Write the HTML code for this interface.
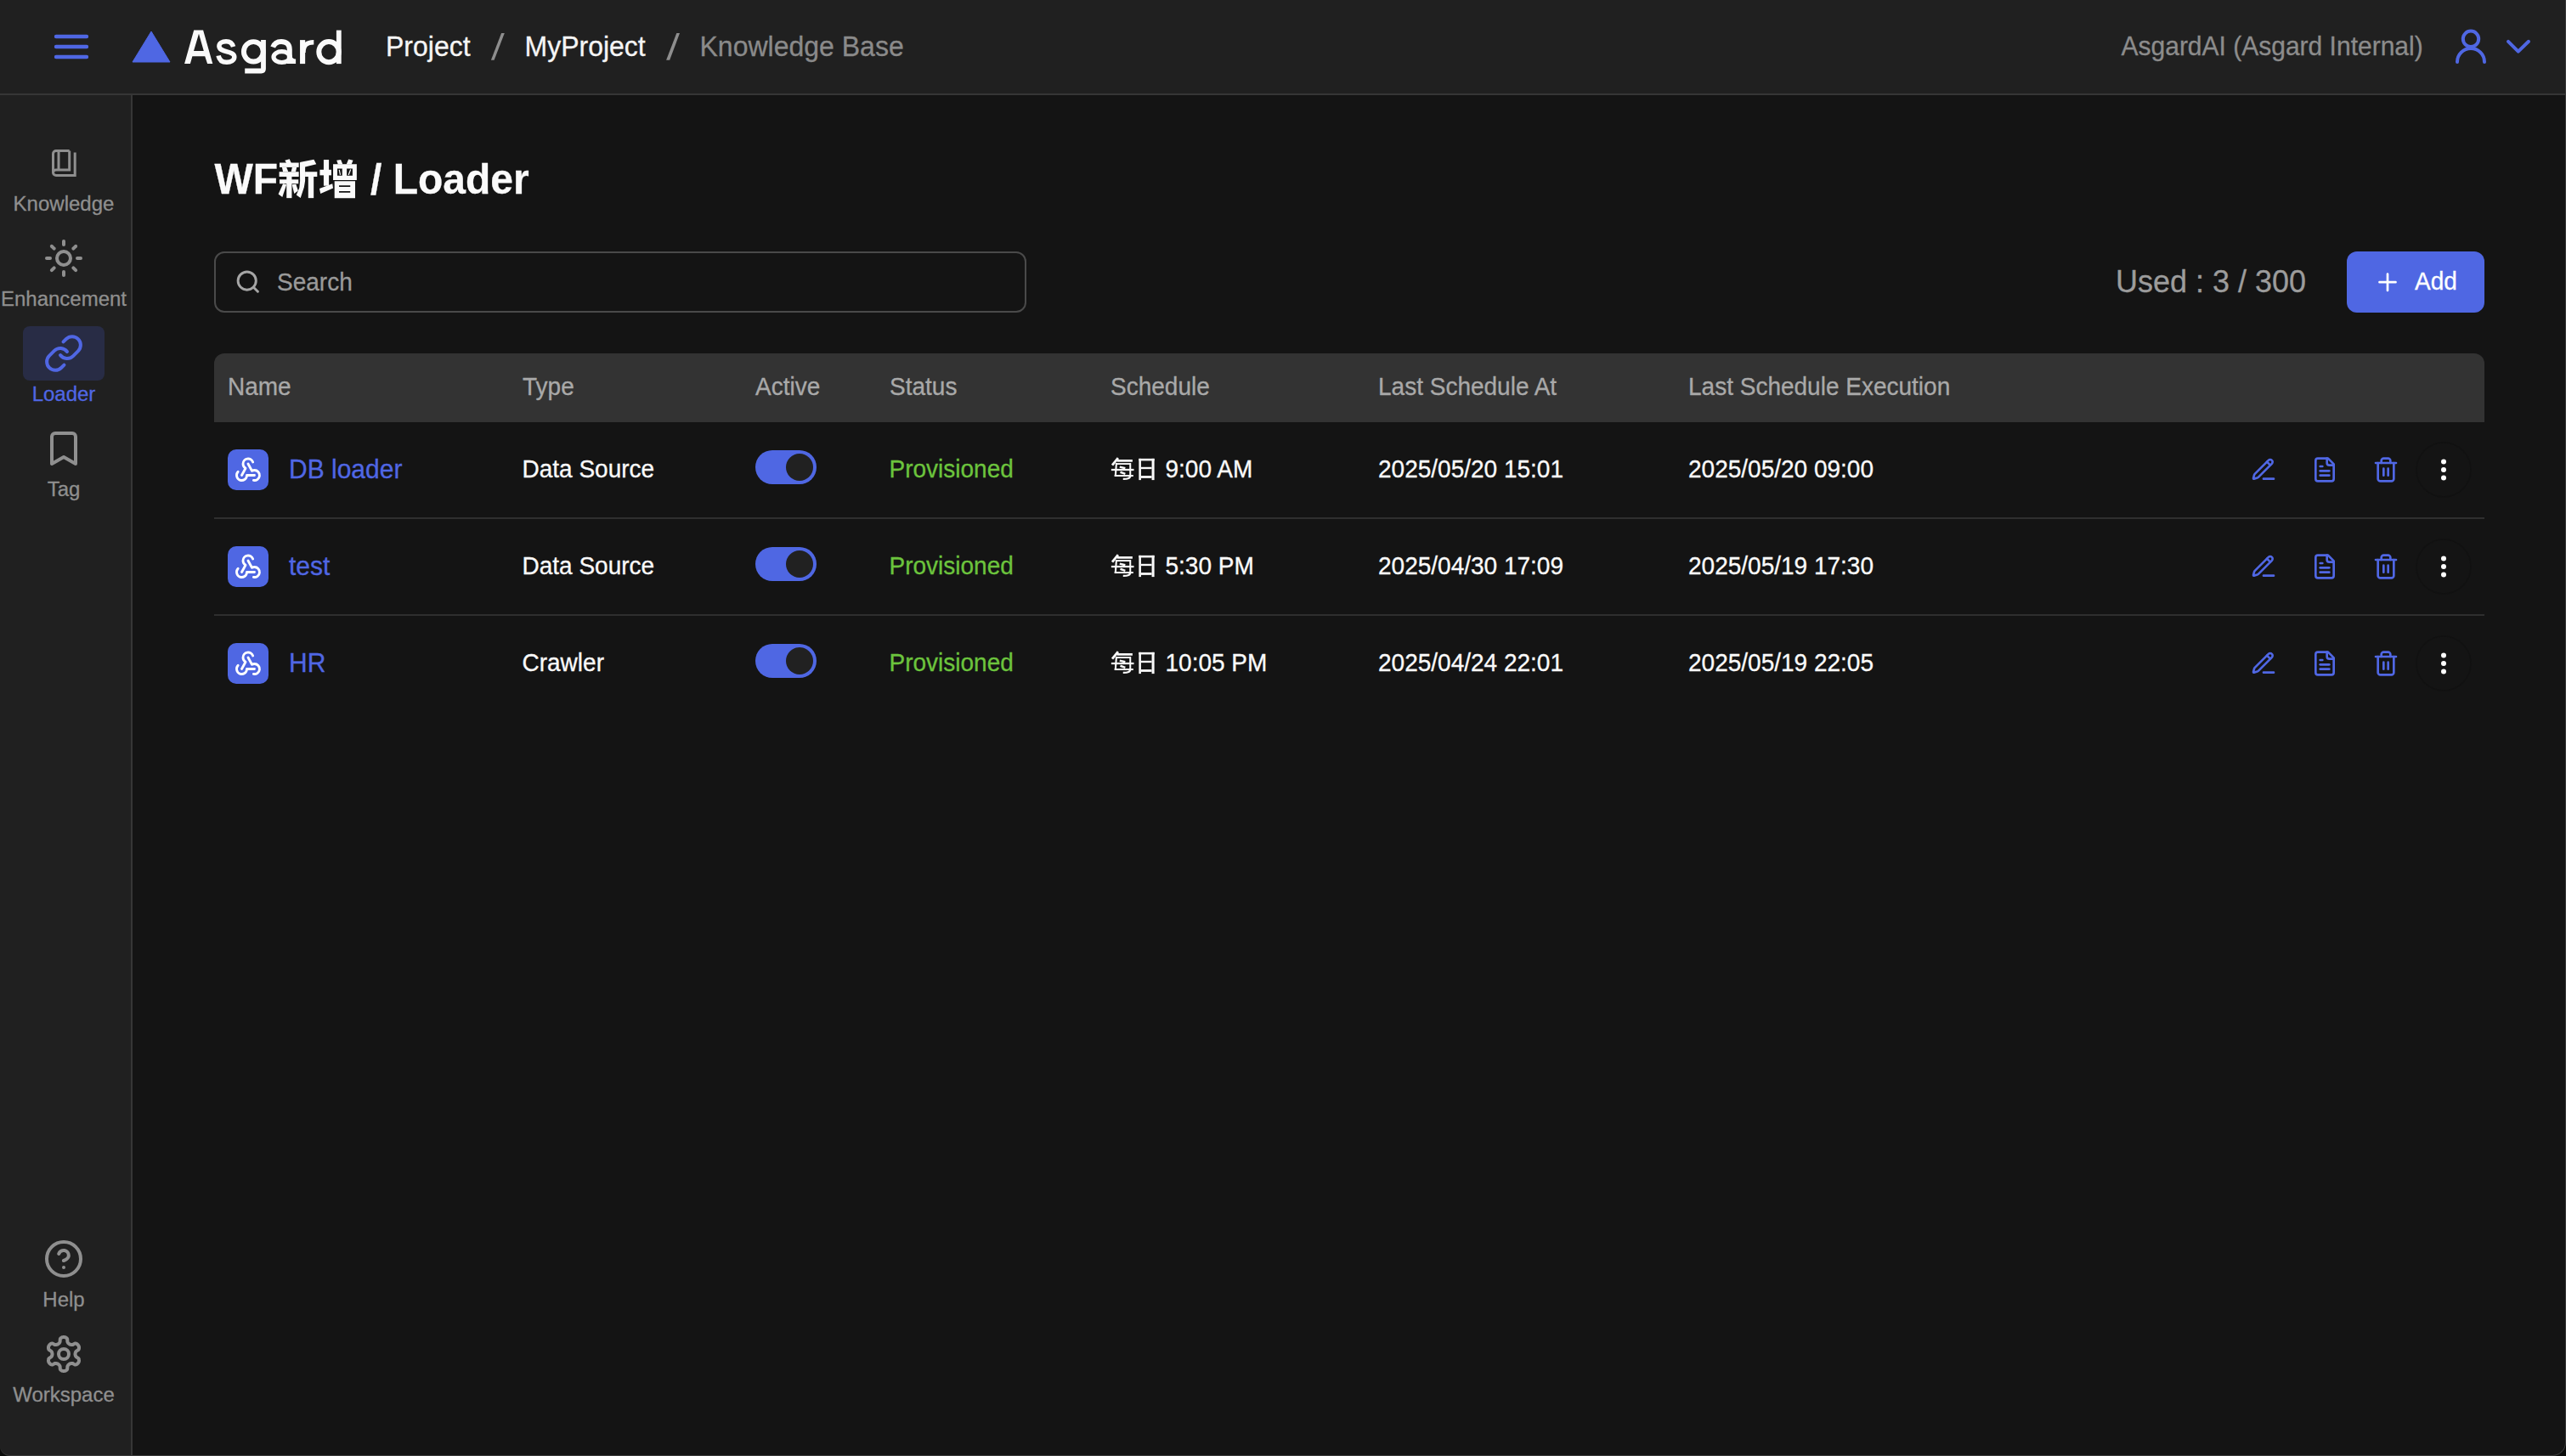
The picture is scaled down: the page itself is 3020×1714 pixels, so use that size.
<!DOCTYPE html>
<html>
<head>
<meta charset="utf-8">
<style>
html,body{margin:0;padding:0;}
body{width:3020px;height:1714px;position:relative;overflow:hidden;background:#141414;font-family:"Liberation Sans",sans-serif;}
.abs{position:absolute;}
.t{position:absolute;white-space:nowrap;line-height:1;transform:translateY(0.8px) scaleY(1.03);transform-origin:0 0.8465em;-webkit-text-stroke:0.3px currentColor;}
svg{position:absolute;overflow:visible;}
#hdr{left:0;top:0;width:3020px;height:110px;background:#202020;border-bottom:2px solid #363636;}
#side{left:0;top:112px;width:154px;height:1602px;background:#202020;border-right:2px solid #363636;}
.lbl{font-size:24px;color:#8f8f8f;text-align:center;width:156px;left:-3px;}
.hd{font-size:28px;color:#a9a9a9;}
.cell{font-size:28px;color:#fafafa;}
.blue{color:#5067e4;}
.green{color:#6cc43d;}
.sep{position:absolute;left:252px;width:2672px;height:2px;background:#2f2f2f;}
.ibox{position:absolute;left:268px;width:48px;height:48px;border-radius:10px;background:#4f67e3;}
.tog{position:absolute;left:889px;width:72px;height:40px;border-radius:20px;background:#4f67e3;}
.tog .k{position:absolute;left:36px;top:4px;width:32px;height:32px;border-radius:16px;background:#212121;}
</style>
</head>
<body>
<!-- HEADER -->
<div id="hdr" class="abs"></div>
<!-- hamburger -->
<svg style="left:0;top:0" width="3020" height="1714"><g stroke="#4f67e3" stroke-width="4.4" stroke-linecap="round"><line x1="66" y1="43" x2="102" y2="43"/><line x1="66" y1="55" x2="102" y2="55"/><line x1="66" y1="67" x2="102" y2="67"/></g>
<path d="M178 37 L200 73 L156 73 Z" fill="#4f67e3" stroke="#4f67e3" stroke-width="1" stroke-linejoin="round"/></svg>
<svg style="left:0;top:0" width="3020" height="1714"><g fill="#fafafa" stroke="none">
<path fill-rule="evenodd" d="M217.1 75.1 L223.9 75.1 L226.4 66.3 L241.2 66.3 L244.1 75.1 L250.3 75.1 L239.1 35.6 L228.2 35.6 Z M228 59.9 L239.8 59.9 L234 39.7 Z"/>
<path d="M343 64.5 Q343.6 69.6 348.1 69.6 L348.1 75.1 L343 75.1 Z"/>
</g><g fill="none" stroke="#fafafa" stroke-width="5.5">
<path d="M274.6 55.1 C273.3 50.6 270 48.7 266.1 48.7 C261.4 48.7 257.9 51 257.9 54.3 C257.9 58.4 262.2 59.7 267.2 60.9 C272.1 62.1 275.8 63.4 275.8 67.1 C275.8 71.2 271.7 73.3 266.9 73.3 C261.8 73.3 258.1 70.8 257.1 65.4"/>
<ellipse cx="298.3" cy="60.8" rx="11.4" ry="11.7" stroke-width="5.9"/>
<path d="M310 47.1 V81 Q310 83.5 307.5 83.5 H288.2" stroke-width="5.8"/>
<path d="M321.2 55.6 C322.8 51 326 48.9 331 48.9 C337 48.9 340.8 52 340.8 58 V75.1" stroke-width="6"/>
<ellipse cx="331.6" cy="67.1" rx="9.6" ry="6.4" stroke-width="5.2"/>
<path d="M356.1 47.1 V75.1" stroke-width="6.1"/>
<path d="M357 62 C357 53 361 49.7 369.3 49.7" stroke-width="5.4"/>
<ellipse cx="387" cy="61.1" rx="11.7" ry="12.1" stroke-width="6"/>
<path d="M398.8 35.6 V75.1" stroke-width="5.8"/>
</g></svg>
<div class="t" style="left:454px;top:38px;font-size:32px;color:#f5f5f5;">Project</div>
<svg style="left:0;top:0" width="3020" height="1714"><g fill="#8e8e8e"><polygon points="577.9,70.7 581.6,70.7 593.8,39 590.1,39"/><polygon points="784.1,70.7 788.2,70.7 800,39 796.3,39"/></g></svg>
<div class="t" style="left:617.5px;top:38px;font-size:32px;color:#f5f5f5;">MyProject</div>

<div class="t" style="left:823.5px;top:38px;font-size:32px;color:#8a8a8a;">Knowledge Base</div>
<div class="t" style="left:2496.5px;top:39px;font-size:30px;color:#8c8c8c;">AsgardAI (Asgard Internal)</div>
<svg style="left:0;top:0" width="3020" height="1714"><g fill="none" stroke="#4f67e3" stroke-width="4" stroke-linecap="round" stroke-linejoin="round">
<circle cx="2908" cy="45.8" r="9.2"/><path d="M2892 73 A16 16 0 0 1 2924 73"/>
<path d="M2952 48.8 L2963.8 60.6 L2976 48.8"/></g></svg>

<!-- SIDEBAR -->
<div id="side" class="abs"></div>
<svg style="left:0;top:0" width="3020" height="1714"><g fill="none" stroke="#8f8f8f" stroke-width="3" stroke-linejoin="miter" stroke-linecap="butt">
<path d="M81.7 177.5 H66 a3.5 3.5 0 0 0 -3.5 3.5 V202.9 a3.5 3.5 0 0 0 3.5 3.5 H88.2 V179.5"/>
<path d="M81.7 177.5 V200.1 H66 a3.3 3.3 0 0 0 -3.5 3.3"/>
<path d="M69 177.5 V200.1"/>
</g></svg>
<div class="t lbl" style="top:227px;">Knowledge</div>
<svg style="left:51px;top:280px" width="48" height="48" viewBox="0 0 24 24"><g fill="none" stroke="#8f8f8f" stroke-width="2" stroke-linecap="round" stroke-linejoin="round"><circle cx="12" cy="12" r="4"/><path d="M12 2v2"/><path d="M12 20v2"/><path d="m4.93 4.93 1.41 1.41"/><path d="m17.66 17.66 1.41 1.41"/><path d="M2 12h2"/><path d="M20 12h2"/><path d="m6.34 17.66-1.41 1.41"/><path d="m19.07 4.93-1.41 1.41"/></g></svg>
<div class="t lbl" style="top:339px;">Enhancement</div>
<div class="abs" style="left:27px;top:384px;width:96px;height:64px;border-radius:8px;background:#282c45;"></div>
<svg style="left:51px;top:392px" width="48" height="48" viewBox="0 0 24 24"><g fill="none" stroke="#5067e4" stroke-width="2" stroke-linecap="round" stroke-linejoin="round"><path d="M10 13a5 5 0 0 0 7.54.54l3-3a5 5 0 0 0-7.07-7.07l-1.72 1.71"/><path d="M14 11a5 5 0 0 0-7.54-.54l-3 3a5 5 0 0 0 7.07 7.07l1.71-1.71"/></g></svg>
<div class="t lbl" style="top:451px;color:#5067e4;">Loader</div>
<svg style="left:51px;top:504px" width="48" height="48" viewBox="0 0 24 24"><g fill="none" stroke="#8f8f8f" stroke-width="2" stroke-linecap="round" stroke-linejoin="round"><path d="m19 21-7-4-7 4V5a2 2 0 0 1 2-2h10a2 2 0 0 1 2 2v16z"/></g></svg>
<div class="t lbl" style="top:563px;">Tag</div>
<svg style="left:51px;top:1458px" width="48" height="48" viewBox="0 0 24 24"><g fill="none" stroke="#8f8f8f" stroke-width="2" stroke-linecap="round" stroke-linejoin="round"><circle cx="12" cy="12" r="10"/><path d="M9.09 9a3 3 0 0 1 5.83 1c0 2-3 3-3 3"/><path d="M12 17h.01"/></g></svg>
<div class="t lbl" style="top:1517px;">Help</div>
<svg style="left:0;top:0" width="3020" height="1714"><g fill="none" stroke="#8f8f8f" stroke-width="4" stroke-linecap="round" stroke-linejoin="round"><path d="M75.0 1574.0 L75.5 1574.0 L76.0 1574.1 L76.6 1574.2 L77.1 1574.4 L77.5 1574.6 L78.0 1574.9 L78.5 1575.3 L78.9 1575.7 L79.2 1576.3 L79.3 1577.8 L79.4 1579.3 L79.6 1579.9 L79.8 1580.4 L80.1 1580.8 L80.3 1581.1 L80.6 1581.4 L80.9 1581.7 L81.2 1581.9 L81.5 1582.1 L81.8 1582.3 L82.1 1582.5 L82.4 1582.6 L82.7 1582.7 L83.1 1582.8 L83.5 1582.9 L83.9 1583.0 L84.4 1583.0 L84.9 1583.0 L85.6 1582.9 L86.8 1582.2 L88.2 1581.5 L88.9 1581.5 L89.5 1581.6 L90.0 1581.8 L90.5 1582.1 L90.9 1582.4 L91.3 1582.8 L91.7 1583.1 L92.0 1583.6 L92.3 1584.0 L92.6 1584.5 L92.8 1585.0 L92.9 1585.5 L93.0 1586.0 L93.0 1586.5 L93.0 1587.1 L92.9 1587.6 L92.8 1588.2 L92.4 1588.8 L91.2 1589.7 L89.9 1590.4 L89.5 1590.9 L89.2 1591.4 L89.0 1591.8 L88.8 1592.2 L88.7 1592.6 L88.6 1592.9 L88.6 1593.3 L88.5 1593.6 L88.5 1594.0 L88.5 1594.4 L88.6 1594.7 L88.6 1595.1 L88.7 1595.4 L88.8 1595.8 L89.0 1596.2 L89.2 1596.6 L89.5 1597.1 L89.9 1597.6 L91.2 1598.3 L92.4 1599.2 L92.8 1599.8 L92.9 1600.4 L93.0 1600.9 L93.0 1601.5 L93.0 1602.0 L92.9 1602.5 L92.8 1603.0 L92.6 1603.5 L92.3 1604.0 L92.0 1604.4 L91.7 1604.9 L91.3 1605.2 L90.9 1605.6 L90.5 1605.9 L90.0 1606.2 L89.5 1606.4 L88.9 1606.5 L88.2 1606.5 L86.8 1605.8 L85.6 1605.1 L84.9 1605.0 L84.4 1605.0 L83.9 1605.0 L83.5 1605.1 L83.1 1605.2 L82.7 1605.3 L82.4 1605.4 L82.1 1605.5 L81.8 1605.7 L81.5 1605.9 L81.2 1606.1 L80.9 1606.3 L80.6 1606.6 L80.3 1606.9 L80.1 1607.2 L79.8 1607.6 L79.6 1608.1 L79.4 1608.7 L79.3 1610.2 L79.2 1611.7 L78.9 1612.3 L78.5 1612.7 L78.0 1613.1 L77.5 1613.4 L77.1 1613.6 L76.6 1613.8 L76.0 1613.9 L75.5 1614.0 L75.0 1614.0 L74.5 1614.0 L74.0 1613.9 L73.4 1613.8 L72.9 1613.6 L72.5 1613.4 L72.0 1613.1 L71.5 1612.7 L71.1 1612.3 L70.8 1611.7 L70.7 1610.2 L70.6 1608.7 L70.4 1608.1 L70.2 1607.6 L69.9 1607.2 L69.7 1606.9 L69.4 1606.6 L69.1 1606.3 L68.8 1606.1 L68.5 1605.9 L68.2 1605.7 L67.9 1605.5 L67.6 1605.4 L67.3 1605.3 L66.9 1605.2 L66.5 1605.1 L66.1 1605.0 L65.6 1605.0 L65.1 1605.0 L64.4 1605.1 L63.2 1605.8 L61.8 1606.5 L61.1 1606.5 L60.5 1606.4 L60.0 1606.2 L59.5 1605.9 L59.1 1605.6 L58.7 1605.2 L58.3 1604.9 L58.0 1604.4 L57.7 1604.0 L57.4 1603.5 L57.2 1603.0 L57.1 1602.5 L57.0 1602.0 L57.0 1601.5 L57.0 1600.9 L57.1 1600.4 L57.2 1599.8 L57.6 1599.2 L58.8 1598.3 L60.1 1597.6 L60.5 1597.1 L60.8 1596.6 L61.0 1596.2 L61.2 1595.8 L61.3 1595.4 L61.4 1595.1 L61.4 1594.7 L61.5 1594.4 L61.5 1594.0 L61.5 1593.6 L61.4 1593.3 L61.4 1592.9 L61.3 1592.6 L61.2 1592.2 L61.0 1591.8 L60.8 1591.4 L60.5 1590.9 L60.1 1590.4 L58.8 1589.7 L57.6 1588.8 L57.2 1588.2 L57.1 1587.6 L57.0 1587.1 L57.0 1586.5 L57.0 1586.0 L57.1 1585.5 L57.2 1585.0 L57.4 1584.5 L57.7 1584.0 L58.0 1583.6 L58.3 1583.1 L58.7 1582.8 L59.1 1582.4 L59.5 1582.1 L60.0 1581.8 L60.5 1581.6 L61.1 1581.5 L61.8 1581.5 L63.2 1582.2 L64.4 1582.9 L65.1 1583.0 L65.6 1583.0 L66.1 1583.0 L66.5 1582.9 L66.9 1582.8 L67.3 1582.7 L67.6 1582.6 L67.9 1582.5 L68.2 1582.3 L68.5 1582.1 L68.8 1581.9 L69.1 1581.7 L69.4 1581.4 L69.7 1581.1 L69.9 1580.8 L70.2 1580.4 L70.4 1579.9 L70.6 1579.3 L70.7 1577.8 L70.8 1576.3 L71.1 1575.7 L71.5 1575.3 L72.0 1574.9 L72.5 1574.6 L72.9 1574.4 L73.4 1574.2 L74.0 1574.1 L74.5 1574.0 Z"/><circle cx="75" cy="1594" r="6"/></g></svg>
<div class="t lbl" style="top:1629px;">Workspace</div>

<!-- MAIN -->
<div class="t" style="left:252.5px;top:187px;font-size:48px;font-weight:bold;color:#fafafa;">WF</div>
<svg style="left:0;top:0" width="3020" height="1714"><g transform="translate(322 180) scale(0.041203)" fill="#fafafa" stroke="none">
<polygon points="325,215 455,175 505,290 375,310"/>
<rect x="170" y="280" width="550" height="130"/>
<polygon points="240,410 370,410 420,540 270,540"/>
<polygon points="530,410 660,410 630,540 500,540"/>
<rect x="160" y="540" width="560" height="140"/>
<rect x="170" y="760" width="540" height="120"/>
<rect x="370" y="680" width="150" height="610"/>
<polygon points="270,880 370,905 250,1265 135,1180"/>
<polygon points="525,905 640,890 700,1080 590,1165"/>
<polygon points="750,270 1150,190 1220,320 900,400"/>
<polygon points="750,270 900,330 900,800 870,980 770,1285 650,1200 735,1000 755,800"/>
<rect x="900" y="540" width="345" height="140"/>
<rect x="990" y="680" width="155" height="610"/>
<rect x="1430" y="195" width="150" height="745"/>
<rect x="1320" y="480" width="330" height="160"/>
<polygon points="1310,1020 1680,880 1700,1010 1340,1165"/>
<polygon points="1800,210 1920,195 1975,325 1840,325"/>
<polygon points="2140,185 2270,210 2225,325 2080,325"/>
<path fill-rule="evenodd" d="M1700 320 H2375 V775 H1700 Z M1820 450 H1960 V650 H1820 Z M2090 450 H2255 V650 H2090 Z"/>
<line x1="1875" y1="480" x2="1905" y2="630" stroke="#fafafa" stroke-width="30"/>
<line x1="2200" y1="475" x2="2140" y2="630" stroke="#fafafa" stroke-width="30"/>
<path fill-rule="evenodd" d="M1740 810 H2330 V1290 H1740 Z M1870 930 H2190 V970 H1870 Z M1870 1095 H2190 V1135 H1870 Z"/>
</g></svg>
<div class="t" style="left:436px;top:187px;font-size:48px;font-weight:bold;color:#fafafa;">/ Loader</div>

<div class="abs" style="left:252px;top:296px;width:952px;height:68px;border:2px solid #4a4a4a;border-radius:12px;"></div>
<svg style="left:0;top:0" width="3020" height="1714"><g fill="none" stroke="#a6a6a6" stroke-width="2.9" stroke-linecap="round"><circle cx="290.7" cy="330.6" r="10.6"/><path d="M298.4 338.3 L303.4 343.3"/></g></svg>
<div class="t" style="left:326px;top:317.5px;font-size:28px;color:#9a9a9a;">Search</div>

<div class="t" style="left:2490px;top:313px;font-size:36px;color:#9c9c9c;">Used : 3 / 300</div>
<div class="abs" style="left:2762px;top:296px;width:162px;height:72px;border-radius:12px;background:#4f67e3;"></div>
<svg style="left:0;top:0" width="3020" height="1714"><g stroke="#fff" stroke-width="2.7" stroke-linecap="round"><path d="M2810 322.5 V342 M2800.5 332.2 H2819.5"/></g></svg>
<div class="t" style="left:2842px;top:317px;font-size:28px;color:#fff;">Add</div>

<!-- TABLE -->
<div class="abs" style="left:252px;top:416px;width:2672px;height:81px;background:#333333;border-radius:12px 12px 0 0;"></div>
<div class="t hd" style="left:268px;top:441px;">Name</div>
<div class="t hd" style="left:615px;top:441px;">Type</div>
<div class="t hd" style="left:889px;top:441px;">Active</div>
<div class="t hd" style="left:1047px;top:441px;">Status</div>
<div class="t hd" style="left:1307px;top:441px;">Schedule</div>
<div class="t hd" style="left:1622px;top:441px;">Last Schedule At</div>
<div class="t hd" style="left:1987px;top:441px;">Last Schedule Execution</div>

<div class="ibox" style="top:529px;"><svg style="left:6px;top:5px" width="36" height="36" viewBox="0 0 24 24"><g fill="none" stroke="#fff" stroke-width="1.9" stroke-linecap="round" stroke-linejoin="round"><path d="M4.12 14.22A4 4 0 1 0 11 17h6"/><path d="M16.24 20.93A4 4 0 1 0 17 13c-.706 0 -1.424 .179 -2 .5l-3 -5.5"/><path d="M15.76 6.63A4 4 0 0 0 8 8c0 1.506 .77 2.818 2 3.5l-3 5.5"/></g></svg></div>
<div class="t cell blue" style="left:340px;top:537px;font-size:30px;">DB loader</div>
<div class="t cell" style="left:614.5px;top:538px;">Data Source</div>
<div class="tog" style="top:530px;"><div class="k"></div></div>
<div class="t cell green" style="left:1046.5px;top:538px;">Provisioned</div>
<svg style="left:0;top:0" width="3020" height="1714"><g transform="translate(1304 536) scale(0.023381)" fill="#fafafa" stroke="none">
<line x1="510" y1="130" x2="215" y2="500" stroke="#fafafa" stroke-width="120"/>
<rect x="450" y="215" width="785" height="115"/>
<rect x="410" y="390" width="740" height="80"/>
<polygon points="380,390 470,390 420,1060 330,1060"/>
<rect x="1080" y="390" width="85" height="700"/>
<path d="M1122 1040 Q1100 1200 760 1195" fill="none" stroke="#fafafa" stroke-width="100"/>
<rect x="165" y="680" width="1140" height="95"/>
<rect x="330" y="985" width="945" height="85"/>
<line x1="590" y1="585" x2="870" y2="650" stroke="#fafafa" stroke-width="105"/>
<line x1="620" y1="845" x2="870" y2="935" stroke="#fafafa" stroke-width="105"/>
<rect x="1555" y="165" width="110" height="1080"/>
<rect x="2205" y="165" width="130" height="1080"/>
<rect x="1555" y="165" width="780" height="110"/>
<rect x="1665" y="590" width="540" height="100"/>
<rect x="1665" y="1030" width="540" height="120"/>
</g></svg>
<div class="t cell" style="left:1371.5px;top:538px;">9:00 AM</div>
<div class="t cell" style="left:1622px;top:538px;">2025/05/20 15:01</div>
<div class="t cell" style="left:1987px;top:538px;">2025/05/20 09:00</div>
<svg style="left:2648px;top:537px" width="32" height="32" viewBox="0 0 24 24"><g fill="none" stroke="#5067e4" stroke-width="2" stroke-linecap="round" stroke-linejoin="round"><path d="M12 20h9"/><path d="M16.376 3.622a1 1 0 0 1 3.002 3.002L7.368 18.635a2 2 0 0 1-.855.506l-2.872.838a.5.5 0 0 1-.62-.62l.838-2.872a2 2 0 0 1 .506-.854z"/><path d="m15 5 3 3"/></g></svg>
<svg style="left:2720px;top:537px" width="32" height="32" viewBox="0 0 24 24"><g fill="none" stroke="#5067e4" stroke-width="2" stroke-linecap="round" stroke-linejoin="round"><path d="M15 2H6a2 2 0 0 0-2 2v16a2 2 0 0 0 2 2h12a2 2 0 0 0 2-2V7Z"/><path d="M14 2v4a2 2 0 0 0 2 2h4"/><path d="M10 9H8"/><path d="M16 13H8"/><path d="M16 17H8"/></g></svg>
<svg style="left:2792px;top:537px" width="32" height="32" viewBox="0 0 24 24"><g fill="none" stroke="#5067e4" stroke-width="2" stroke-linecap="round" stroke-linejoin="round"><path d="M3 6h18"/><path d="M19 6v14c0 1-1 2-2 2H7c-1 0-2-1-2-2V6"/><path d="M8 6V4c0-1 1-2 2-2h4c1 0 2 1 2 2v2"/><line x1="10" x2="10" y1="11" y2="17"/><line x1="14" x2="14" y1="11" y2="17"/></g></svg>
<svg style="left:0;top:0" width="3020" height="1714"><circle cx="2876" cy="553.0" r="32" fill="none" stroke="#111111" stroke-width="1.5"/><g fill="#fff"><circle cx="2876" cy="543.4" r="3"/><circle cx="2876" cy="553" r="3"/><circle cx="2876" cy="562.6" r="3"/></g></svg>
<div class="sep" style="top:609px;"></div>
<div class="ibox" style="top:643px;"><svg style="left:6px;top:5px" width="36" height="36" viewBox="0 0 24 24"><g fill="none" stroke="#fff" stroke-width="1.9" stroke-linecap="round" stroke-linejoin="round"><path d="M4.12 14.22A4 4 0 1 0 11 17h6"/><path d="M16.24 20.93A4 4 0 1 0 17 13c-.706 0 -1.424 .179 -2 .5l-3 -5.5"/><path d="M15.76 6.63A4 4 0 0 0 8 8c0 1.506 .77 2.818 2 3.5l-3 5.5"/></g></svg></div>
<div class="t cell blue" style="left:340px;top:651px;font-size:30px;">test</div>
<div class="t cell" style="left:614.5px;top:652px;">Data Source</div>
<div class="tog" style="top:644px;"><div class="k"></div></div>
<div class="t cell green" style="left:1046.5px;top:652px;">Provisioned</div>
<svg style="left:0;top:0" width="3020" height="1714"><g transform="translate(1304 650) scale(0.023381)" fill="#fafafa" stroke="none">
<line x1="510" y1="130" x2="215" y2="500" stroke="#fafafa" stroke-width="120"/>
<rect x="450" y="215" width="785" height="115"/>
<rect x="410" y="390" width="740" height="80"/>
<polygon points="380,390 470,390 420,1060 330,1060"/>
<rect x="1080" y="390" width="85" height="700"/>
<path d="M1122 1040 Q1100 1200 760 1195" fill="none" stroke="#fafafa" stroke-width="100"/>
<rect x="165" y="680" width="1140" height="95"/>
<rect x="330" y="985" width="945" height="85"/>
<line x1="590" y1="585" x2="870" y2="650" stroke="#fafafa" stroke-width="105"/>
<line x1="620" y1="845" x2="870" y2="935" stroke="#fafafa" stroke-width="105"/>
<rect x="1555" y="165" width="110" height="1080"/>
<rect x="2205" y="165" width="130" height="1080"/>
<rect x="1555" y="165" width="780" height="110"/>
<rect x="1665" y="590" width="540" height="100"/>
<rect x="1665" y="1030" width="540" height="120"/>
</g></svg>
<div class="t cell" style="left:1371.5px;top:652px;">5:30 PM</div>
<div class="t cell" style="left:1622px;top:652px;">2025/04/30 17:09</div>
<div class="t cell" style="left:1987px;top:652px;">2025/05/19 17:30</div>
<svg style="left:2648px;top:651px" width="32" height="32" viewBox="0 0 24 24"><g fill="none" stroke="#5067e4" stroke-width="2" stroke-linecap="round" stroke-linejoin="round"><path d="M12 20h9"/><path d="M16.376 3.622a1 1 0 0 1 3.002 3.002L7.368 18.635a2 2 0 0 1-.855.506l-2.872.838a.5.5 0 0 1-.62-.62l.838-2.872a2 2 0 0 1 .506-.854z"/><path d="m15 5 3 3"/></g></svg>
<svg style="left:2720px;top:651px" width="32" height="32" viewBox="0 0 24 24"><g fill="none" stroke="#5067e4" stroke-width="2" stroke-linecap="round" stroke-linejoin="round"><path d="M15 2H6a2 2 0 0 0-2 2v16a2 2 0 0 0 2 2h12a2 2 0 0 0 2-2V7Z"/><path d="M14 2v4a2 2 0 0 0 2 2h4"/><path d="M10 9H8"/><path d="M16 13H8"/><path d="M16 17H8"/></g></svg>
<svg style="left:2792px;top:651px" width="32" height="32" viewBox="0 0 24 24"><g fill="none" stroke="#5067e4" stroke-width="2" stroke-linecap="round" stroke-linejoin="round"><path d="M3 6h18"/><path d="M19 6v14c0 1-1 2-2 2H7c-1 0-2-1-2-2V6"/><path d="M8 6V4c0-1 1-2 2-2h4c1 0 2 1 2 2v2"/><line x1="10" x2="10" y1="11" y2="17"/><line x1="14" x2="14" y1="11" y2="17"/></g></svg>
<svg style="left:0;top:0" width="3020" height="1714"><circle cx="2876" cy="667.0" r="32" fill="none" stroke="#111111" stroke-width="1.5"/><g fill="#fff"><circle cx="2876" cy="657.4" r="3"/><circle cx="2876" cy="667" r="3"/><circle cx="2876" cy="676.6" r="3"/></g></svg>
<div class="sep" style="top:723px;"></div>
<div class="ibox" style="top:757px;"><svg style="left:6px;top:5px" width="36" height="36" viewBox="0 0 24 24"><g fill="none" stroke="#fff" stroke-width="1.9" stroke-linecap="round" stroke-linejoin="round"><path d="M4.12 14.22A4 4 0 1 0 11 17h6"/><path d="M16.24 20.93A4 4 0 1 0 17 13c-.706 0 -1.424 .179 -2 .5l-3 -5.5"/><path d="M15.76 6.63A4 4 0 0 0 8 8c0 1.506 .77 2.818 2 3.5l-3 5.5"/></g></svg></div>
<div class="t cell blue" style="left:340px;top:765px;font-size:30px;">HR</div>
<div class="t cell" style="left:614.5px;top:766px;">Crawler</div>
<div class="tog" style="top:758px;"><div class="k"></div></div>
<div class="t cell green" style="left:1046.5px;top:766px;">Provisioned</div>
<svg style="left:0;top:0" width="3020" height="1714"><g transform="translate(1304 764) scale(0.023381)" fill="#fafafa" stroke="none">
<line x1="510" y1="130" x2="215" y2="500" stroke="#fafafa" stroke-width="120"/>
<rect x="450" y="215" width="785" height="115"/>
<rect x="410" y="390" width="740" height="80"/>
<polygon points="380,390 470,390 420,1060 330,1060"/>
<rect x="1080" y="390" width="85" height="700"/>
<path d="M1122 1040 Q1100 1200 760 1195" fill="none" stroke="#fafafa" stroke-width="100"/>
<rect x="165" y="680" width="1140" height="95"/>
<rect x="330" y="985" width="945" height="85"/>
<line x1="590" y1="585" x2="870" y2="650" stroke="#fafafa" stroke-width="105"/>
<line x1="620" y1="845" x2="870" y2="935" stroke="#fafafa" stroke-width="105"/>
<rect x="1555" y="165" width="110" height="1080"/>
<rect x="2205" y="165" width="130" height="1080"/>
<rect x="1555" y="165" width="780" height="110"/>
<rect x="1665" y="590" width="540" height="100"/>
<rect x="1665" y="1030" width="540" height="120"/>
</g></svg>
<div class="t cell" style="left:1371.5px;top:766px;">10:05 PM</div>
<div class="t cell" style="left:1622px;top:766px;">2025/04/24 22:01</div>
<div class="t cell" style="left:1987px;top:766px;">2025/05/19 22:05</div>
<svg style="left:2648px;top:765px" width="32" height="32" viewBox="0 0 24 24"><g fill="none" stroke="#5067e4" stroke-width="2" stroke-linecap="round" stroke-linejoin="round"><path d="M12 20h9"/><path d="M16.376 3.622a1 1 0 0 1 3.002 3.002L7.368 18.635a2 2 0 0 1-.855.506l-2.872.838a.5.5 0 0 1-.62-.62l.838-2.872a2 2 0 0 1 .506-.854z"/><path d="m15 5 3 3"/></g></svg>
<svg style="left:2720px;top:765px" width="32" height="32" viewBox="0 0 24 24"><g fill="none" stroke="#5067e4" stroke-width="2" stroke-linecap="round" stroke-linejoin="round"><path d="M15 2H6a2 2 0 0 0-2 2v16a2 2 0 0 0 2 2h12a2 2 0 0 0 2-2V7Z"/><path d="M14 2v4a2 2 0 0 0 2 2h4"/><path d="M10 9H8"/><path d="M16 13H8"/><path d="M16 17H8"/></g></svg>
<svg style="left:2792px;top:765px" width="32" height="32" viewBox="0 0 24 24"><g fill="none" stroke="#5067e4" stroke-width="2" stroke-linecap="round" stroke-linejoin="round"><path d="M3 6h18"/><path d="M19 6v14c0 1-1 2-2 2H7c-1 0-2-1-2-2V6"/><path d="M8 6V4c0-1 1-2 2-2h4c1 0 2 1 2 2v2"/><line x1="10" x2="10" y1="11" y2="17"/><line x1="14" x2="14" y1="11" y2="17"/></g></svg>
<svg style="left:0;top:0" width="3020" height="1714"><circle cx="2876" cy="781.0" r="32" fill="none" stroke="#111111" stroke-width="1.5"/><g fill="#fff"><circle cx="2876" cy="771.4" r="3"/><circle cx="2876" cy="781" r="3"/><circle cx="2876" cy="790.6" r="3"/></g></svg>
<div class="abs" style="left:0;top:0;width:3020px;height:1714px;box-sizing:border-box;border-right:1px solid #3a3a3a;border-bottom:1px solid #3a3a3a;border-radius:0 0 16px 12px;box-shadow:0 0 0 40px #0b0c0b;pointer-events:none;"></div>
</body>
</html>
